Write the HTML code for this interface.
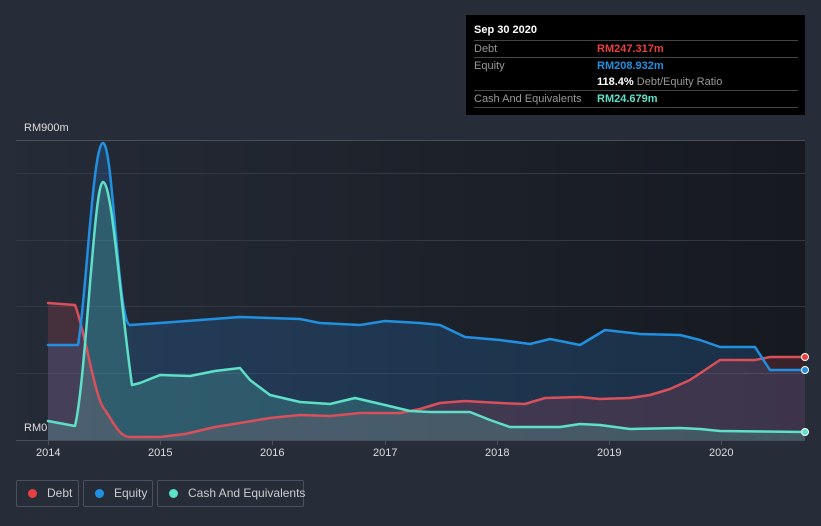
<!DOCTYPE html>
<html><head><style>
html,body{margin:0;width:821px;height:526px;overflow:hidden}
body{background:#262c38;font-family:"Liberation Sans",sans-serif;position:relative}
.t{position:absolute;font-size:11px;color:#ddd}
.tip{position:absolute;left:466px;top:15px;width:339px;height:100px;background:#000}
.row{position:absolute;left:8px;width:324px;border-top:1px solid #444;font-size:11px;color:#999;height:16px;line-height:16px}
.row b{position:absolute;left:123px;font-weight:bold;white-space:nowrap}
.leg{position:absolute;top:480px;height:27px;border:1px solid #4a505c;border-radius:2px;font-size:12px;color:#ccc;line-height:25px;box-sizing:border-box;white-space:nowrap}
.leg i{display:inline-block;width:9px;height:9px;border-radius:50%;margin:0 10px 0 11px;vertical-align:-1px}
</style></head><body>
<svg width="821" height="526" style="position:absolute;left:0;top:0">
<defs><linearGradient id="bg" x1="0" x2="1"><stop offset="0" stop-color="#252b37"/><stop offset="1" stop-color="#16191f"/></linearGradient></defs>
<rect x="16" y="140" width="789" height="300" fill="url(#bg)"/>
<g stroke="#323844" stroke-width="1"><line x1="16" x2="805" y1="173.5" y2="173.5"/><line x1="16" x2="805" y1="240.5" y2="240.5"/><line x1="16" x2="805" y1="306.5" y2="306.5"/><line x1="16" x2="805" y1="373.5" y2="373.5"/></g>
<line x1="16" x2="805" y1="140.5" y2="140.5" stroke="#4a505a"/>
<g stroke-linejoin="round" stroke-linecap="round" stroke-width="2.5">
<path d="M48,345 L78,345 C86,300 93,143 103,143 C113,143 118,325 130,325 L160,323 L200,320 L240,317 L300,319 L320,323 L360,325 L385,321 L420,323 L440,325 L465,337 L500,340 L530,344 L550,339 L580,345 L605,330 L640,334 L680,335 L700,340 L720,347 L755,347 L770,370 L805,370 L805,440 L48,440Z" fill="#2a7fd4" fill-opacity="0.22" stroke="none"/>
<path d="M48,303 L75,305 C85,330 95,400 105,410 C115,425 120,437 130,437 L160,437 L185,434 L215,427 L240,423 L270,418 L300,415 L330,416 L360,413 L400,413 L420,409 L440,403 L465,401 L500,403 L525,404 L545,398 L580,397 L600,399 L630,398 L650,395 L670,389 L690,380 L705,370 L720,360 L755,360 L770,357 L805,357 L805,440 L48,440Z" fill="#e0505c" fill-opacity="0.18" stroke="none"/>
<path d="M48,421 L75,426 C86,380 94,182 103,182 C112,182 120,300 132,385 L140,383 L160,375 L190,376 L215,371 L240,368 L250,380 L270,395 L300,402 L330,404 L355,398 L385,405 L410,411 L430,412 L470,412 L490,420 L510,427 L560,427 L580,424 L600,425 L630,429 L680,428 L700,429 L720,431 L805,432 L805,440 L48,440Z" fill="#5ee0c8" fill-opacity="0.2" stroke="none"/>
<path d="M48,303 L75,305 C85,330 95,400 105,410 C115,425 120,437 130,437 L160,437 L185,434 L215,427 L240,423 L270,418 L300,415 L330,416 L360,413 L400,413 L420,409 L440,403 L465,401 L500,403 L525,404 L545,398 L580,397 L600,399 L630,398 L650,395 L670,389 L690,380 L705,370 L720,360 L755,360 L770,357 L805,357" fill="none" stroke="#d9505a"/>
<path d="M48,345 L78,345 C86,300 93,143 103,143 C113,143 118,325 130,325 L160,323 L200,320 L240,317 L300,319 L320,323 L360,325 L385,321 L420,323 L440,325 L465,337 L500,340 L530,344 L550,339 L580,345 L605,330 L640,334 L680,335 L700,340 L720,347 L755,347 L770,370 L805,370" fill="none" stroke="#2190e0"/>
<path d="M48,421 L75,426 C86,380 94,182 103,182 C112,182 120,300 132,385 L140,383 L160,375 L190,376 L215,371 L240,368 L250,380 L270,395 L300,402 L330,404 L355,398 L385,405 L410,411 L430,412 L470,412 L490,420 L510,427 L560,427 L580,424 L600,425 L630,429 L680,428 L700,429 L720,431 L805,432" fill="none" stroke="#5ee0c8"/>
</g>
<line x1="16" x2="805" y1="440.5" y2="440.5" stroke="#4a505a"/>
<g stroke="#4a505a"><line x1="48.5" x2="48.5" y1="440" y2="445"/><line x1="160.5" x2="160.5" y1="440" y2="445"/><line x1="272.5" x2="272.5" y1="440" y2="445"/><line x1="385.5" x2="385.5" y1="440" y2="445"/><line x1="497.5" x2="497.5" y1="440" y2="445"/><line x1="609.5" x2="609.5" y1="440" y2="445"/><line x1="721.5" x2="721.5" y1="440" y2="445"/></g>
<circle cx="805" cy="357" r="3.5" fill="#e84040" stroke="#fff" stroke-width="1"/>
<circle cx="805" cy="370" r="3.5" fill="#2190e0" stroke="#fff" stroke-width="1"/>
<circle cx="805" cy="432" r="3.5" fill="#5ee0c8" stroke="#fff" stroke-width="1"/>
</svg>
<div class="t" style="left:24px;top:122px">RM900m</div>
<div class="t" style="left:24px;top:422px">RM0</div>
<div class="t" style="left:36px;top:447px">2014</div>
<div class="t" style="left:148px;top:447px">2015</div>
<div class="t" style="left:260px;top:447px">2016</div>
<div class="t" style="left:373px;top:447px">2017</div>
<div class="t" style="left:485px;top:447px">2018</div>
<div class="t" style="left:597px;top:447px">2019</div>
<div class="t" style="left:709px;top:447px">2020</div>
<div class="tip">
<div style="position:absolute;left:8px;top:9px;font-size:11px;font-weight:bold;color:#fff">Sep 30 2020</div>
<div class="row" style="top:25px">Debt<b style="color:#e84040">RM247.317m</b></div>
<div class="row" style="top:42px">Equity<b style="color:#2190e0">RM208.932m</b></div>
<div class="row" style="top:59px;border-top:none"><b style="color:#fff">118.4% <span style="font-weight:normal;color:#999">Debt/Equity Ratio</span></b></div>
<div class="row" style="top:75px;border-bottom:1px solid #444">Cash And Equivalents<b style="color:#5ee0c8">RM24.679m</b></div>
</div>
<div class="leg" style="left:16px;width:63px"><i style="background:#e84040"></i>Debt</div>
<div class="leg" style="left:83px;width:70px"><i style="background:#2190e0"></i>Equity</div>
<div class="leg" style="left:157px;width:147px"><i style="background:#5ee0c8"></i>Cash And Equivalents</div>
</body></html>
